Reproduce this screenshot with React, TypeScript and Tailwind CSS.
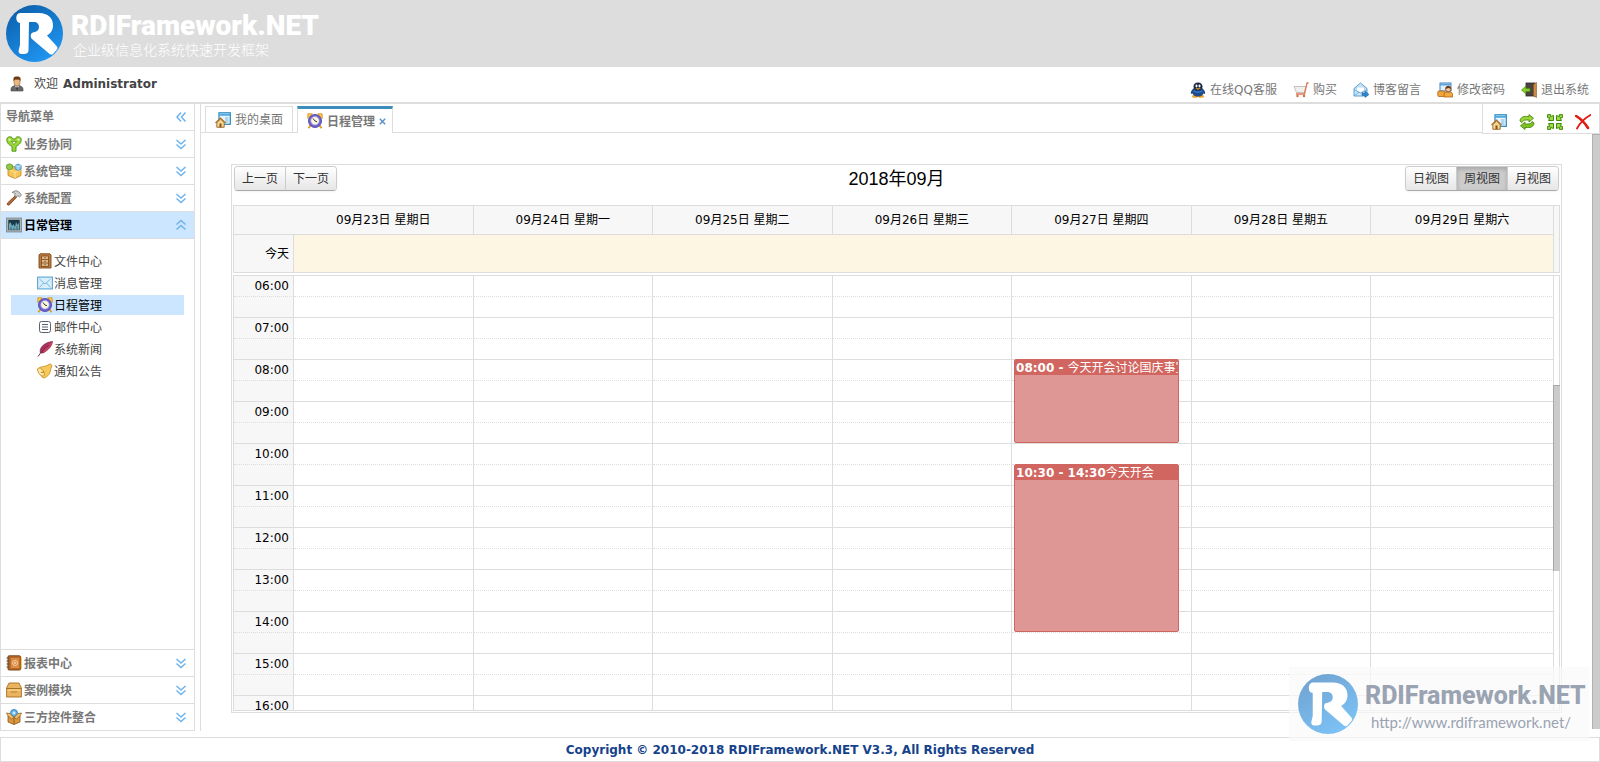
import { useState } from 'react'
import type { ReactNode } from 'react'
import clsx from 'clsx'

const DAYS = [
  '09月23日 星期日',
  '09月24日 星期一',
  '09月25日 星期二',
  '09月26日 星期三',
  '09月27日 星期四',
  '09月28日 星期五',
  '09月29日 星期六',
]

const HOURS = [6, 7, 8, 9, 10, 11, 12, 13, 14, 15, 16]
const SLOT_HEIGHT = 21

type CalendarEvent = {
  day: number
  start: number
  end: number
  time: string
  title: string
}

const EVENTS: CalendarEvent[] = [
  { day: 4, start: 8, end: 10, time: '08:00 - ', title: '今天开会讨论国庆事宜' },
  { day: 4, start: 10.5, end: 14.5, time: '10:30 - 14:30', title: '今天开会' },
]

/* ---------- icons ---------- */

function Svg({ children, className = 'size-4' }: { children: ReactNode; className?: string }) {
  return (
    <svg viewBox="0 0 16 16" className={clsx('shrink-0', className)} fill="none" aria-hidden="true">
      {children}
    </svg>
  )
}

function RMark({ from, to, id, className }: { from: string; to: string; id: string; className: string }) {
  return (
    <svg viewBox="0 0 57 57" className={clsx('shrink-0', className)} aria-hidden="true">
      <defs>
        <linearGradient id={id} x1="0.2" y1="0" x2="0.8" y2="1">
          <stop offset="0" stopColor={from} />
          <stop offset="1" stopColor={to} />
        </linearGradient>
      </defs>
      <circle cx="28.500" cy="28.500" r="28.500" fill={`url(#${id})`} />
      <path
        fill="#fff"
        d="M14 8h19c9 0 14 5 14 12 0 5-2 8-6 10.500L50.500 41c1.500 1.500 1 3 0 4L47 49c-1 1-3 .5-4-.5L26 34c-2-2-1.500-6 1-6.500 4-.5 6-2.500 6-5.500s-2-5-5-5h-5l-.5 28c0 3-2 4-5 4H16c-3 0-4-2-3-5l1-4V18c-5 0-5-10 0-10z"
      />
    </svg>
  )
}

const PersonIcon = () => (
  <Svg>
    <path d="M2 15v-2c0-2 2-3 4-3.500h4c2 .5 4 1.500 4 3.500v2z" fill="#686868" stroke="#444" strokeWidth=".6" />
    <path d="M6 9.500 8 14l2-4.500z" fill="#fff" />
    <path d="M7.500 10.500h1L9 13l-1 1.500L7 13z" fill="#333" />
    <path d="M5 3h6v3.500C11 8.500 9.500 10 8 10S5 8.500 5 6.500z" fill="#e9b983" stroke="#8a5a2b" strokeWidth=".6" />
    <path d="M4.500 5V2.500C4.500 1 6 .5 8 .5s3.500.5 3.500 2V5L10 3.500H6z" fill="#6b3a14" />
  </Svg>
)

const PenguinIcon = () => (
  <Svg>
    <ellipse cx="5" cy="14.300" rx="3" ry="1.500" fill="#f2a51f" />
    <ellipse cx="11" cy="14.300" rx="3" ry="1.500" fill="#f2a51f" />
    <path d="M4 6C2.500 7 .8 9 .8 11c0 1 .8 1 1.700.5C3.500 14 6 14.500 8 14.500s4.500-.5 5.500-3c.9.5 1.700.5 1.700-.5 0-2-1.700-4-3.200-5z" fill="#1f4a8c" />
    <path d="M8 .5C5 .5 3.500 2.500 3.500 4.500S5 8.500 8 8.500s4.500-2 4.500-4S11 .5 8 .5z" fill="#1c2740" />
    <ellipse cx="6.500" cy="4" rx="1" ry="1.400" fill="#fff" />
    <ellipse cx="9.500" cy="4" rx="1" ry="1.400" fill="#fff" />
    <path d="M5 6.200h6L8 7.800z" fill="#f2a51f" />
    <path d="M3.500 9c3 1.500 6 1.500 9 0" stroke="#3b7ad0" strokeWidth="1.200" />
  </Svg>
)

const CartIcon = () => (
  <Svg>
    <path d="M1 4.500h12l-1.500 6H3.500z" fill="#f1efee" stroke="#b9b2ae" strokeWidth=".8" />
    <path d="M15.500 1H14l-2.500 11H3" stroke="#df7650" strokeWidth="1.300" />
    <circle cx="4.500" cy="14" r="1.200" fill="#d9683f" />
    <circle cx="11" cy="14" r="1.200" fill="#d9683f" />
  </Svg>
)

const OpenMailIcon = () => (
  <Svg>
    <path d="M1 6.500 7.500 1 14 6.500V14H1z" fill="#cde7f8" stroke="#4a93cc" strokeWidth=".9" />
    <path d="M3.500 5h8v4l-4 2-4-2z" fill="#fff" stroke="#9cc6e4" strokeWidth=".6" />
    <path d="M1 7.500 7.500 11 14 7.500M1 14l5-4M14 14l-5-4" stroke="#5ba3d6" strokeWidth=".8" />
    <path d="M9 11h3V9l4 3.500-4 3V13.500H9z" fill="#2f86cf" stroke="#1c5e9c" strokeWidth=".5" />
  </Svg>
)

const PasswordIcon = () => (
  <Svg>
    <rect x="3" y="1" width="11" height="8" fill="#e2f0fb" stroke="#3577b8" strokeWidth=".9" />
    <path d="M3 2.500h11" stroke="#5ea3dc" strokeWidth="2" />
    <rect x=".8" y="9" width="7" height="5.500" rx="1" fill="#f0a53c" stroke="#a8641a" strokeWidth=".8" />
    <path d="M7 15v-2c0-2 1.500-3 3-3h3c1.500 0 2.500 1 2.500 3v2z" fill="#f3ab3f" stroke="#a8641a" strokeWidth=".8" />
    <circle cx="11.300" cy="7" r="2.800" fill="#f4c99a" stroke="#6b3a14" strokeWidth=".7" />
    <path d="M8.500 7C8.500 3 14 3 14 7l-2.500-1z" fill="#6b3a14" />
  </Svg>
)

const ExitIcon = () => (
  <Svg>
    <rect x="5" y="1" width="9" height="13" fill="#4a4340" stroke="#2e2825" strokeWidth=".8" />
    <path d="m12.500 2.500 3-2v15l-3-1.500z" fill="#cd8a45" stroke="#8b5520" strokeWidth=".6" />
    <path d="M.5 8 5 4v2.500h4v3H5V12z" fill="#86cc2a" stroke="#4b8a0d" strokeWidth=".7" />
  </Svg>
)

const DesktopIcon = () => (
  <Svg>
    <rect x="4" y=".8" width="11.300" height="11.500" fill="#e8f5fc" stroke="#2585bd" strokeWidth="1.200" />
    <path d="M4 2.800h11" stroke="#51ade0" strokeWidth="2" />
    <path d="M10 6h3.500M10 8h3.500M10 10h3.500" stroke="#69b1dd" strokeWidth=".9" />
    <path d="M1.800 10.500v4.800h7.400v-4.800L5.500 7z" fill="#f5d78f" stroke="#8c5b1b" strokeWidth=".8" />
    <path d="m.5 11 5-5 5 5" stroke="#a86c2a" strokeWidth="1.100" />
    <path d="M4.500 11.500h2v3.800h-2z" fill="#8c4f17" />
  </Svg>
)

const ClockIcon = () => (
  <Svg>
    <path d="M.8.8h4.500L.8 5.500zM15.200.8h-4.500l4.500 4.700z" fill="#f7cf4b" stroke="#d98c20" strokeWidth=".8" />
    <path d="m1.500 15.200 2-3M14.500 15.200l-2-3" stroke="#e0a030" strokeWidth="2" />
    <circle cx="8" cy="8" r="6.500" fill="#6c62cf" stroke="#4338a0" strokeWidth=".8" />
    <circle cx="8" cy="7.800" r="4.200" fill="#fcf6da" stroke="#a69fe6" strokeWidth=".7" />
    <path d="M6 5.500 8 8l2 .8" stroke="#333" strokeWidth="1" />
  </Svg>
)

const RefreshIcon = () => (
  <Svg>
    <path d="M1 7c0-3 3-5 6.500-4.500H10V.5l4.500 3.700L10 8V6H7C5 6 3.500 7 3 8.500z" fill="#9bd33a" stroke="#4b8a0d" strokeWidth=".9" />
    <path d="M15 9c0 3-3 5-6.500 4.500H6v2L1.500 11.800 6 8v2h3c2 0 3.500-1 4-2.500z" fill="#7fc022" stroke="#4b8a0d" strokeWidth=".9" />
  </Svg>
)

const ShrinkIcon = () => (
  <Svg>
    <g fill="#a2d94a" stroke="#3f8a0b" strokeWidth="1">
      <path d="M.6.6h3v2L6.500 1.500v5H1.500l1.200-2.800H.6z" />
      <path d="M15.400.6h-3v2L9.500 1.500v5h5l-1.200-2.800h2.100z" />
      <path d="M.6 15.400h3v-2l2.900 1.100v-5H1.500l1.200 2.800H.6z" />
      <path d="M15.400 15.400h-3v-2l-2.900 1.100v-5h5l-1.200 2.800h2.100z" />
    </g>
  </Svg>
)

const CloseIcon = () => (
  <Svg>
    <path d="M1.200 2C6 5 10 9 13 14" stroke="#e3180f" strokeWidth="2.600" strokeLinecap="round" />
    <path d="M15.500 1C10 4 5 8.500 2 14.500" stroke="#e3180f" strokeWidth="1.800" strokeLinecap="round" />
  </Svg>
)

const BranchIcon = () => (
  <Svg>
    <path
      d="M4 .8C1.500.8.500 2.500.8 4.500 1 7.500 3.500 9 6 10.500v4.700h4v-4.700c2.500-1.500 5-3 5.200-6C15.500 2.500 14.500.8 12 .8c-2 0-2.500 1.200-2.800 2.200H6.800C6.500 2 6 .8 4 .8z"
      fill="#9ad637"
      stroke="#4b8f12"
      strokeWidth=".9"
    />
    <path d="M5.500 5.500h5L8 8.500z" fill="#fff" stroke="#4b8f12" strokeWidth=".7" />
    <circle cx="3.500" cy="3.700" r="1.100" fill="#e6f7c4" />
    <circle cx="12.500" cy="3.700" r="1.100" fill="#e6f7c4" />
  </Svg>
)

const BoxesIcon = () => (
  <Svg>
    <path d="m2 6 6-2.500L15 6.500v6L9 15.500l-7-3z" fill="#f7c452" stroke="#c07f1c" strokeWidth=".8" />
    <path d="m2 6.500 7 3 6-3M9 9.500v6" stroke="#fbe2a0" strokeWidth="1" />
    <path d="M.6 2 3.500.8 6.500 2v3.500L3.500 7l-2.900-1.500z" fill="#8fca4a" stroke="#4f8f1a" strokeWidth=".7" />
    <path d="m9 2.500 3-1.500 3.200 1.500V6L12 7.500 9 6z" fill="#7fc2ec" stroke="#3a82b8" strokeWidth=".7" />
    <path d="m9 2.500 3 1.300 3.200-1.300M12 4v3" stroke="#e3f3fc" strokeWidth=".7" />
  </Svg>
)

const HammerIcon = () => (
  <Svg>
    <path d="m9.500 5.500-8 7.500c-1 1.500.5 2.800 2 1.800l7.500-8z" fill="#b56a35" stroke="#6e3a15" strokeWidth=".8" />
    <path d="M6 2.500C8.500.5 11 .3 13 2l2.500 3-2 2-1.700-1.500L10.500 7 8.300 5 9.500 4C8.500 3 7.500 2.800 6 2.500z" fill="#cfcfcf" stroke="#777" strokeWidth=".8" />
  </Svg>
)

const ChartIcon = () => (
  <Svg>
    <rect x=".6" y="1.100" width="14.800" height="13.800" fill="#b4babd" stroke="#82898c" strokeWidth="1" />
    <rect x="2.300" y="2.800" width="11.400" height="10.400" fill="#17394a" />
    <path d="M3 12.800V7l1.500-2L6 9l1.500-2L9 10l1-5 1.500 3L13 5.500v7.300z" fill="#6ea9b8" />
    <path d="M5 12.800V10M8 12.800V11M11 12.800V9" stroke="#17394a" strokeWidth=".6" />
  </Svg>
)

const CabinetIcon = () => (
  <Svg>
    <path d="M2 2 3 .8h10L14 2v13H2z" fill="#bd7b3f" stroke="#7c4a1c" strokeWidth=".9" />
    <rect x="4.500" y="3" width="7" height="10.500" fill="#e3b47d" stroke="#7c4a1c" strokeWidth=".8" />
    <path d="M4.500 6.500h7M4.500 10h7" stroke="#7c4a1c" strokeWidth=".8" />
    <path d="M7 4.800h2M7 8.300h2M7 11.800h2" stroke="#6f747a" strokeWidth="1" />
  </Svg>
)

const MailIcon = () => (
  <Svg>
    <rect x=".6" y="2.100" width="14.800" height="11.800" fill="#d8eefb" stroke="#5aa6d6" strokeWidth="1.100" />
    <path d="m2.500 4 5.500 5L13.500 4M2.500 12.500 6.500 8M13.500 12.500 9.500 8" stroke="#6fb2dc" strokeWidth=".9" />
  </Svg>
)

const ListIcon = () => (
  <Svg>
    <rect x="2.500" y="2.500" width="11" height="11" rx="2" fill="#fff" stroke="#5b6070" strokeWidth="1" />
    <path d="M5 5.500h6M5 8h6M5 10.500h6" stroke="#5b6070" strokeWidth="1" />
  </Svg>
)

const FeatherIcon = () => (
  <Svg>
    <path d="M15.500.5C10 1 5 4 3.500 8c-.5 1.500-.5 3 0 4 1.500.3 3.500 0 5-1.500C12 8 15 5 15.500.5z" fill="#a8325f" stroke="#6d1c3d" strokeWidth=".6" />
    <path d="M15.500.5C11 3 8 6 5 11l3-.3C12 8 15 5 15.500.5z" fill="#c9405f" />
    <path d="M12 4C8 7 4 11 1 15.500" stroke="#5d1d45" strokeWidth=".9" />
  </Svg>
)

const HornIcon = () => (
  <Svg>
    <path d="M1 6c2.500-3 6-2 9-3.500L13.500.8l1.500 2c-2 3-.5 7.500-5.500 11-2 1.500-4 1.500-4.500 0z" fill="#f5c95a" stroke="#c98b1e" strokeWidth=".8" />
    <ellipse cx="4" cy="9" rx="2.500" ry="4.700" transform="rotate(-32 4 9)" fill="#fbe6a5" stroke="#c98b1e" strokeWidth=".8" />
    <path d="M4 9.500 7 9" stroke="#b4781a" strokeWidth="1.200" />
  </Svg>
)

const BookIcon = () => (
  <Svg>
    <rect x="2" y=".8" width="12.500" height="14.200" rx="1" fill="#bb6a28" stroke="#6f3a10" strokeWidth=".9" />
    <path d="M15.200 2v12" stroke="#e8b13c" strokeWidth="1" />
    <rect x="5" y="3" width="8" height="10" fill="#d98c45" />
    <circle cx="9" cy="8" r="2.500" stroke="#fbdcae" strokeWidth=".8" />
    <circle cx="9" cy="8" r=".9" fill="#fbdcae" />
    <path d="M.5 3h3M.5 6h3M.5 9h3M.5 12h3" stroke="#555" strokeWidth="1" />
  </Svg>
)

const ChestIcon = () => (
  <Svg>
    <path d="M.6 6 3 1h10l2.400 5v9H.6z" fill="#e9b35f" stroke="#a86e22" strokeWidth=".9" />
    <path d="M.6 6.500h14.800" stroke="#a86e22" strokeWidth="1" />
    <path d="M1.500 8h13" stroke="#fbdc9c" strokeWidth="1" />
    <path d="M5 10h6" stroke="#bf8433" strokeWidth="1" />
  </Svg>
)

const PackageIcon = () => (
  <Svg>
    <circle cx="8" cy="4" r="3.500" fill="#5fb7ec" stroke="#2177b4" strokeWidth=".8" />
    <path d="M6.500 4h3M8 2.500v3" stroke="#fff" strokeWidth=".9" />
    <path d="m2 7 6 1.500L14 7v6l-6 2.500L2 13z" fill="#d9973f" stroke="#8a5718" strokeWidth=".8" />
    <path d="M8 8.500v7" stroke="#8a5718" strokeWidth=".8" />
    <path d="m2 7-1.500-3L4 4.500 6 6.500l2 2L5.500 10zM14 7l1.500-3L12 4.500l-2 2-2 2 2.500 1.500z" fill="#f0be6e" stroke="#8a5718" strokeWidth=".7" />
  </Svg>
)

function Chevrons({ direction }: { direction: 'up' | 'down' | 'left' }) {
  const paths = {
    up: 'M3.500 7.500 8 3.500l4.500 4M3.500 12.500l4.500-4 4.500 4',
    down: 'M3.500 4 8 8l4.500-4M3.500 8.500l4.500 4 4.500-4',
    left: 'M8 3.500 4 8l4 4.500M12.500 3.500 8.500 8l4 4.500',
  }
  return (
    <Svg>
      <path d={paths[direction]} stroke="#6db3ec" strokeWidth="1.500" />
    </Svg>
  )
}

/* ---------- data ---------- */

const TOP_LINKS = [
  { label: '在线QQ客服', Icon: PenguinIcon },
  { label: '购买', Icon: CartIcon },
  { label: '博客留言', Icon: OpenMailIcon },
  { label: '修改密码', Icon: PasswordIcon },
  { label: '退出系统', Icon: ExitIcon },
]

const SECTIONS = [
  { label: '业务协同', Icon: BranchIcon },
  { label: '系统管理', Icon: BoxesIcon },
  { label: '系统配置', Icon: HammerIcon },
  { label: '日常管理', Icon: ChartIcon },
]

const BOTTOM_SECTIONS = [
  { label: '报表中心', Icon: BookIcon },
  { label: '案例模块', Icon: ChestIcon },
  { label: '三方控件整合', Icon: PackageIcon },
]

const MENU = [
  { label: '文件中心', Icon: CabinetIcon },
  { label: '消息管理', Icon: MailIcon },
  { label: '日程管理', Icon: ClockIcon },
  { label: '邮件中心', Icon: ListIcon },
  { label: '系统新闻', Icon: FeatherIcon },
  { label: '通知公告', Icon: HornIcon },
]

const TOOLS = [
  { label: '我的桌面', Icon: DesktopIcon },
  { label: '刷新', Icon: RefreshIcon },
  { label: '全屏', Icon: ShrinkIcon },
  { label: '关闭', Icon: CloseIcon },
]

const VIEWS = ['日视图', '周视图', '月视图']

/* ---------- layout ---------- */

function Header() {
  return (
    <header className="shrink-0">
      <div className="flex h-[67px] items-center gap-2 bg-[#ddd] px-1.5">
        <RMark id="logo" from="#0c60ab" to="#2199f5" className="size-[57px]" />
        <div className="pt-1 text-white">
          <div className="font-[Roboto,sans-serif] text-[28px] leading-7 font-black">RDIFramework.NET</div>
          <div className="pl-0.5 text-sm leading-5 font-light">企业级信息化系统快速开发框架</div>
        </div>
      </div>
      <div className="flex h-[37px] justify-between border-b-2 border-[#ddd] pr-[11px] pl-[9px]">
        <div className="flex h-[34px] items-center gap-[9px] text-[#444]">
          <PersonIcon />
          <span className="flex gap-[5px]">
            欢迎 <b>Administrator</b>
          </span>
        </div>
        <nav className="flex items-end gap-4 pb-1">
          {TOP_LINKS.map(({ label, Icon }) => (
            <a key={label} href="#" className="flex items-center gap-1 text-[#777]">
              <Icon />
              {label}
            </a>
          ))}
        </nav>
      </div>
    </header>
  )
}

type SectionProps = {
  label: string
  Icon: () => ReactNode
  active?: boolean
}

function Section({ label, Icon, active = false }: SectionProps) {
  return (
    <button
      type="button"
      aria-expanded={active}
      className={clsx(
        'flex h-[27px] w-full shrink-0 items-center gap-0.5 border-b border-[#ddd] px-[5px] text-left font-bold',
        active ? 'bg-[#cce6ff] text-black' : 'text-[#777]',
      )}
    >
      <Icon />
      <span className="flex-1 pt-0.5">{label}</span>
      <Chevrons direction={active ? 'up' : 'down'} />
    </button>
  )
}

function Sidebar() {
  const [selected, setSelected] = useState('日程管理')

  return (
    <aside className="flex w-[195px] shrink-0 flex-col border-x border-[#ddd]">
      <div className="flex h-[27px] shrink-0 items-center justify-between border-b border-[#ddd] px-[5px] font-bold text-[#777]">
        导航菜单
        <button type="button" aria-label="折叠菜单">
          <Chevrons direction="left" />
        </button>
      </div>
      {SECTIONS.map((s) => (
        <Section key={s.label} label={s.label} Icon={s.Icon} active={s.label === '日常管理'} />
      ))}
      <ul className="flex min-h-0 flex-1 flex-col gap-0.5 overflow-hidden border-b border-[#ddd] px-2.5 pt-3">
        {MENU.map(({ label, Icon }) => (
          <li key={label}>
            <button
              type="button"
              onClick={() => setSelected(label)}
              className={clsx(
                'flex h-5 w-full items-center gap-px pl-[26px]',
                selected === label ? 'bg-[#cce6ff] text-black' : 'text-[#444]',
              )}
            >
              <Icon />
              <span className="pt-0.5">{label}</span>
            </button>
          </li>
        ))}
      </ul>
      {BOTTOM_SECTIONS.map((s) => (
        <Section key={s.label} label={s.label} Icon={s.Icon} />
      ))}
    </aside>
  )
}

function TabBar() {
  return (
    <div className="flex h-[30px] shrink-0">
      <div className="flex h-[29px] flex-1 items-end gap-1 border-b border-[#ddd] pl-1 text-[#777]">
        <button type="button" className="flex h-[26px] items-center gap-1 border-x border-t border-[#ddd] px-[9px]">
          <DesktopIcon />
          我的桌面
        </button>
        <div className="-mb-px flex h-[27px] items-center border-x border-t-3 border-x-[#ddd] border-t-[#3c8dbc] bg-white pr-1.5 pl-[9px]">
          <button type="button" className="flex items-center gap-1 font-bold">
            <ClockIcon />
            <span className="pt-0.5">日程管理</span>
          </button>
          <button type="button" aria-label="关闭标签" className="ml-1">
            <svg viewBox="0 0 7 7" className="size-[7px]" aria-hidden="true">
              <path d="M.8.8 6.200 6.200M6.200.8.8 6.200" stroke="#5b8fc9" strokeWidth="1.400" />
            </svg>
          </button>
        </div>
      </div>
      <div className="flex items-end gap-3 border-r border-b border-l border-[#ddd] px-2 pb-[3px]">
        {TOOLS.map(({ label, Icon }) => (
          <button key={label} type="button" aria-label={label}>
            <Icon />
          </button>
        ))}
      </div>
    </div>
  )
}

function ButtonGroup({ items, active, onPick }: { items: string[]; active?: string; onPick?: (v: string) => void }) {
  return (
    <div className="flex h-[25px] overflow-hidden rounded border border-[#ccc] border-b-[#aaa] shadow-xs">
      {items.map((item, i) => (
        <button
          key={item}
          type="button"
          onClick={() => onPick?.(item)}
          className={clsx(
            'px-[7px] text-[#333]',
            i > 0 && 'border-l border-[#ccc]',
            item === active
              ? 'bg-[#ccc] inset-shadow-sm inset-shadow-black/20'
              : 'bg-linear-to-b from-white to-[#e6e6e6]',
          )}
        >
          {item}
        </button>
      ))}
    </div>
  )
}

function Columns() {
  return (
    <colgroup>
      <col className="w-[60px]" />
      {DAYS.map((day, i) => (
        <col key={day} className={i < 6 ? 'w-[13.6%]' : ''} />
      ))}
    </colgroup>
  )
}

function EventBlock({ event }: { event: CalendarEvent }) {
  const height = (event.end - event.start) * 2 * SLOT_HEIGHT
  return (
    <div
      className="absolute -top-px right-3 left-0.5 z-10 overflow-hidden rounded-xs border border-[#d0665f] bg-[#de9794] text-white"
      style={{ height }}
    >
      <div className="h-[15px] overflow-hidden bg-[#d0665f] pl-px leading-4 whitespace-nowrap">
        <b>{event.time}</b>
        {event.title}
      </div>
    </div>
  )
}

function SlotRow({ hour, half }: { hour: number; half: boolean }) {
  const start = half ? hour + 0.5 : hour
  const line = half ? 'border-b border-solid' : 'border-b border-b-[#ddd] [border-bottom-style:dotted]'
  return (
    <tr className="h-[21px]">
      <th scope="row" className={clsx('border-r border-[#ddd] bg-[#f7f7f7] p-0 pr-1 text-right leading-5 font-normal', line)}>
        {!half && `${String(hour).padStart(2, '0')}:00`}
      </th>
      {DAYS.map((day, i) => (
        <td key={day} className={clsx('relative border-r border-[#ddd] p-0', line)}>
          {EVENTS.filter((e) => e.day === i && e.start === start).map((e) => (
            <EventBlock key={e.time} event={e} />
          ))}
        </td>
      ))}
    </tr>
  )
}

function Calendar() {
  const [view, setView] = useState('周视图')

  return (
    <section className="flex min-h-0 flex-1 flex-col border border-[#ddd] p-px">
      <div className="grid h-[39px] shrink-0 grid-cols-3 items-start px-px">
        <div className="flex">
          <ButtonGroup items={['上一页', '下一页']} />
        </div>
        <h1 className="text-center font-['Liberation_Sans','Noto_Sans_CJK_SC',sans-serif] text-lg leading-[26px]">
          2018年09月
        </h1>
        <div className="flex justify-end">
          <ButtonGroup items={VIEWS} active={view} onPick={setView} />
        </div>
      </div>

      <div className="shrink-0 border border-[#ddd] bg-[#f7f7f7] pr-[5px]">
        <table className="w-full table-fixed border-separate border-spacing-0">
          <Columns />
          <thead>
            <tr className="h-[29px]">
              <th className="border-b border-[#ddd] p-0" />
              {DAYS.map((day) => (
                <th key={day} scope="col" className="border-r border-b border-[#ddd] p-0 font-normal">
                  {day}
                </th>
              ))}
            </tr>
          </thead>
          <tbody>
            <tr className="h-[37px]">
              <th scope="row" className="border-r border-[#ddd] p-0 pr-1 text-right font-normal">
                今天
              </th>
              <td colSpan={7} className="border-r border-[#ddd] bg-[#fdf6e2] p-0" />
            </tr>
          </tbody>
        </table>
      </div>

      <div className="relative mt-0.5 min-h-0 flex-1 border border-[#ddd]">
        <div className="h-full overflow-hidden pr-[5px]">
          <table className="w-full table-fixed border-separate border-spacing-0">
            <Columns />
            <tbody>
              {HOURS.flatMap((hour) => [
                <SlotRow key={`${hour}-a`} hour={hour} half={false} />,
                <SlotRow key={`${hour}-b`} hour={hour} half />,
              ])}
            </tbody>
          </table>
        </div>
        <div className="absolute top-1/4 -right-px h-[43%] w-[7px] border-t border-l border-[#a8a8a8] bg-[#cbcbcb]" />
      </div>
    </section>
  )
}

function Watermark() {
  return (
    <div className="pointer-events-none absolute right-[11px] bottom-[21px] z-20 flex h-[74px] w-[300px] items-center gap-[7px] bg-[#fafafa]/70 pl-[9px] text-[#9aa3b1]">
      <RMark id="mark" from="#70a3d0" to="#7dc4f9" className="size-[60px]" />
      <div className="pt-2 font-[Roboto,sans-serif]">
        <div className="text-[25px] leading-7 font-extrabold">RDIFramework.NET</div>
        <div className="pl-1.5 font-[Lato,sans-serif] text-[15px] leading-6">http://www.rdiframework.net/</div>
      </div>
    </div>
  )
}

export default function App() {
  return (
    <div className="relative flex h-screen flex-col bg-white font-['DejaVu_Sans','Noto_Sans_CJK_SC',sans-serif] text-xs text-black">
      <Header />
      <div className="flex min-h-0 flex-1 gap-[5px]">
        <Sidebar />
        <main className="flex min-w-0 flex-1 flex-col border-l border-[#ddd]">
          <TabBar />
          <div className="flex min-h-0 flex-1">
            <div className="flex min-w-0 flex-1 flex-col px-[30px] pt-[30px] pb-[18px]">
              <Calendar />
            </div>
            <div className="mb-0.5 w-2 shrink-0 border-t border-l border-[#b0b0b0] bg-[#cbcbcb]" />
          </div>
        </main>
      </div>
      <footer className="mt-1.5 flex h-[25px] shrink-0 items-center justify-center border border-[#ddd] font-bold text-[#15428b]">
        Copyright © 2010-2018 RDIFramework.NET V3.3, All Rights Reserved
      </footer>
      <Watermark />
    </div>
  )
}
